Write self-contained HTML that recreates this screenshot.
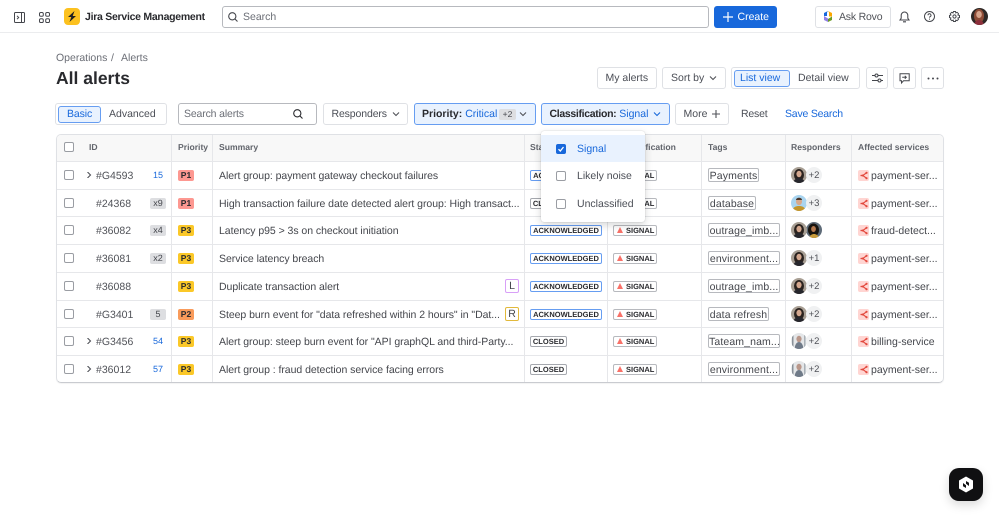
<!DOCTYPE html>
<html lang="en"><head><meta charset="utf-8"><title>All alerts</title>
<style>
*{box-sizing:border-box}
html,body{margin:0;padding:0;background:#fff}
body{width:999px;height:517px;position:relative;overflow:hidden;font-family:"Liberation Sans",sans-serif;font-size:10.5px;color:#4b4e56;text-rendering:geometricPrecision;filter:blur(.25px)}
.a{position:absolute}
.t{position:absolute;white-space:nowrap;line-height:14px;height:14px}
.b{position:absolute;border:1px solid #dfe1e5;border-radius:3px;background:#fff}
.on{position:absolute;border:1px solid #669df1;border-radius:3px;background:#e9f2fe}
.blue{color:#1868db}
.l{position:absolute;background:#e6e7ea}
.cb{position:absolute;left:64px;width:10px;height:10px;border:1px solid #9a9da3;border-radius:2px;background:#fff}
.id{position:absolute;left:96px;white-space:nowrap;line-height:14px;color:#505258;margin-top:1px}
.c{position:absolute;left:150px;width:16px;height:11px;line-height:11px;text-align:center;font-size:9px;border-radius:2px}
.g{background:#dddee1;color:#44464c}
.n{color:#1868db;background:none}
.p{position:absolute;left:178px;width:16px;height:11px;line-height:11px;text-align:center;font-size:8.5px;font-weight:bold;border-radius:2px;color:#292a2e;margin-top:.5px}
.p1{background:#fd9891}.p2{background:#f99b5b}.p3{background:#fbc828}
.s{position:absolute;left:219px;white-space:nowrap;line-height:14px;color:#44464c;margin-top:1px;font-size:10.5px;letter-spacing:-.045px}
.st{position:absolute;left:530px;height:11px;line-height:9px;font-size:7.5px;font-weight:bold;color:#292a2e;border:1px solid #a5a8ae;border-radius:2px;padding:0;text-align:center;white-space:nowrap;background:#fff}
.ack{border-color:#669df1;width:72px}
.cl{width:37px}
.sg{position:absolute;left:613px;width:44px;height:11px;line-height:9px;font-size:7.5px;font-weight:bold;color:#292a2e;border:1px solid #b7b9be;border-radius:2px;padding-left:12px;background:#fff}
.sg:before{content:"";position:absolute;left:3px;top:1.5px;border-left:3.5px solid transparent;border-right:3.5px solid transparent;border-bottom:6px solid #f87168}
.tg{position:absolute;left:708px;height:14px;line-height:14px;border:1px solid #b7b9be;border-radius:2px;text-align:center;color:#44464c;white-space:nowrap;background:#fff;letter-spacing:.12px}
.m{position:absolute;left:806px;width:16px;height:16px;border-radius:50%;background:#f0f1f2;font-size:9.5px;line-height:17px;text-align:center;color:#505258}
.av{position:absolute;left:791px;width:16px;height:16px;border-radius:50%;overflow:hidden}
.sv{position:absolute;left:858px;width:11px;height:11px;border-radius:2px;background:#ffd5d2;margin-top:0}
.svt{position:absolute;left:871px;white-space:nowrap;line-height:14px;color:#44464c;margin-top:1px}
.h{position:absolute;top:140px;line-height:14px;font-size:8.6px;font-weight:bold;color:#62656c;white-space:nowrap}
.chev{position:absolute;left:86px;width:6px;height:6px}
svg{display:block;overflow:visible}
</style></head><body>
<svg width="0" height="0" style="position:absolute"><defs>
<symbol id="a1" viewBox="0 0 16 16"><rect width="16" height="16" fill="#a89f94"/><ellipse cx="8" cy="8" rx="5" ry="6" fill="#2a221e"/><ellipse cx="8" cy="7" rx="2.6" ry="3.2" fill="#d3a78e"/><path d="M2 16c1-4 4-5 6-5s5 1 6 5z" fill="#26262c"/></symbol>
<symbol id="a2" viewBox="0 0 16 16"><rect width="16" height="16" fill="#a9d4ef"/><ellipse cx="8" cy="6.6" rx="3" ry="3.5" fill="#d8a98c"/><path d="M5 5c0-3 6-3 6 0z" fill="#4a3427"/><path d="M1 16c1-4 4-5 7-5s6 1 7 5z" fill="#c4952a"/></symbol>
<symbol id="a3" viewBox="0 0 16 16"><rect width="16" height="16" fill="#5e6b78"/><ellipse cx="7.5" cy="8" rx="5.5" ry="6.5" fill="#17130f"/><ellipse cx="7.5" cy="7" rx="2.4" ry="3" fill="#b5794f"/><path d="M3 16c1-3 3-4 5-4s4 1 5 4z" fill="#c89a3a"/></symbol>
<symbol id="a4" viewBox="0 0 16 16"><rect width="16" height="16" fill="#e4e6e8"/><rect x="1" y="2" width="1.5" height="12" fill="#8a9199"/><rect x="13" y="2" width="1.5" height="12" fill="#a9b0b6"/><ellipse cx="8" cy="6" rx="2.6" ry="3.2" fill="#b9978a"/><path d="M3.500 16c.5-5 2.500-7 4.500-7s4 2 4.500 7z" fill="#6f7a88"/></symbol>
<symbol id="svc" viewBox="0 0 11 11"><path d="M8.500 2.800 4.800 5.500 8.500 8.200M2.500 5.500h2.300" fill="none" stroke="#e2483d" stroke-width="1.200"/><circle cx="8.500" cy="2.800" r="1.100" fill="#e2483d"/><circle cx="8.500" cy="8.200" r="1.100" fill="#e2483d"/><circle cx="4.500" cy="5.500" r="1" fill="#e2483d"/></symbol>
<symbol id="chv" viewBox="0 0 6 6"><path d="M1.500 0 4.500 3 1.500 6" fill="none" stroke="#505258" stroke-width="1.100"/></symbol>
<symbol id="dn" viewBox="0 0 8 8"><path d="M1 2.500 4 5.500 7 2.500" fill="none" stroke="#505258" stroke-width="1.100"/></symbol>
<symbol id="dnb" viewBox="0 0 8 8"><path d="M1 2.500 4 5.500 7 2.500" fill="none" stroke="#1868db" stroke-width="1.100"/></symbol>
</defs></svg>

<!-- top bar -->
<div class="a" style="left:0;top:32px;width:999px;height:1px;background:#ebecee"></div>
<svg class="a" style="left:14px;top:11.500px" width="11" height="11" viewBox="0 0 11 11" fill="none" stroke="#44464c"><rect x=".5" y=".5" width="10" height="10" rx="1"/><path d="M7.500 1v9M3 3.800 4.700 5.500 3 7.200"/></svg>
<svg class="a" style="left:39px;top:11.500px" width="11" height="11" viewBox="0 0 11 11" fill="none" stroke="#44464c"><rect x=".5" y=".5" width="3.800" height="3.800" rx="1.300"/><rect x="6.700" y=".5" width="3.800" height="3.800" rx="1.300"/><rect x=".5" y="6.700" width="3.800" height="3.800" rx="1.300"/><rect x="6.700" y="6.700" width="3.800" height="3.800" rx="1.300"/></svg>
<div class="a" style="left:64px;top:8px;width:16px;height:17px;border-radius:4px;background:#fcc11f"></div>
<svg class="a" style="left:64px;top:8px" width="16" height="17" viewBox="0 0 16 17"><path d="M10.500 3 4 9h3.300L5.500 14 12 8H8.700z" fill="#1f1f21"/></svg>
<div class="t" style="left:85px;top:9.500px;font-size:10.500px;color:#292a2e;font-weight:bold;letter-spacing:-.27px">Jira Service Management</div>
<div class="a" style="left:222px;top:5.500px;width:487px;height:22px;border:1px solid #b7b9be;border-radius:3px"></div>
<svg class="a" style="left:228px;top:12px" width="10" height="10" viewBox="0 0 10 10" fill="none" stroke="#44464c" stroke-width="1.100"><circle cx="4.300" cy="4.300" r="3.600"/><path d="M7 7l2.500 2.500"/></svg>
<div class="t" style="left:243px;top:9.500px;color:#6b6e76">Search</div>
<div class="a" style="left:714px;top:5.500px;width:63px;height:22px;background:#1868db;border-radius:3px"></div>
<svg class="a" style="left:723px;top:12px" width="10" height="10" viewBox="0 0 10 10" stroke="#fff" stroke-width="1.200"><path d="M5 0v10M0 5h10"/></svg>
<div class="t" style="left:737.500px;top:9.500px;color:#fff">Create</div>
<div class="b" style="left:815px;top:5.500px;width:76px;height:22px"></div>
<svg class="a" style="left:823px;top:11px" width="10" height="11" viewBox="0 0 10 11"><path d="M5 0 1 2v3h3V1.500z" fill="#1868db"/><path d="M5 0l4 2v3.500H6V1.500z" fill="#fca700"/><path d="M1 5v4l4 2V7.500z" fill="#8f7ee7"/><path d="M9 5.500V9l-4 2V8z" fill="#6a9a23"/></svg>
<div class="t" style="left:839px;top:9.500px;color:#505258;letter-spacing:-.2px">Ask Rovo</div>
<svg class="a" style="left:899px;top:10.500px" width="11" height="12" viewBox="0 0 11 12" fill="none" stroke="#44464c" stroke-width="1.050"><path d="M1 9h9L8.800 7.200V4.300a3.300 3.300 0 0 0-6.600 0v2.900zM4 10.800h3"/></svg>
<svg class="a" style="left:924px;top:11px" width="11" height="11" viewBox="0 0 11 11" fill="none" stroke="#44464c" stroke-width="1"><circle cx="5.500" cy="5.500" r="5"/><path d="M4 4.300a1.500 1.500 0 1 1 2.200 1.300c-.5.300-.7.500-.7 1"/><path d="M5.500 7.600v1"/></svg>
<svg class="a" style="left:949px;top:11px" width="11" height="11" viewBox="0 0 11 11" fill="none" stroke="#44464c" stroke-width="1"><path d="M4.500.5h2l.3 1.400 1.300-.6 1.400 1.400-.6 1.300 1.600.5v2l-1.600.5.600 1.300-1.400 1.400-1.300-.6-.3 1.400h-2l-.3-1.400-1.300.6L1.300 8.300l.6-1.300L.5 6.500v-2l1.400-.5-.6-1.300 1.400-1.400 1.300.6z"/><circle cx="5.500" cy="5.500" r="1.600"/></svg>
<svg class="a" style="left:971px;top:8px" width="17" height="17" viewBox="0 0 17 17"><defs><clipPath id="cc"><circle cx="8.500" cy="8.500" r="8.500"/></clipPath></defs><g clip-path="url(#cc)"><rect width="17" height="17" fill="#2d2826"/><ellipse cx="8" cy="8" rx="5" ry="7" fill="#8d4c36"/><ellipse cx="8" cy="6.500" rx="2.800" ry="3.500" fill="#d6a48c"/><path d="M3 17c1-4 3-5 5-5s4 1 5 5z" fill="#8c2f3b"/></g></svg>

<!-- heading -->
<div class="t" style="left:56px;top:51px;color:#6b6e76">Operations</div>
<div class="t" style="left:111px;top:51px;color:#6b6e76">/</div>
<div class="t" style="left:121px;top:51px;color:#6b6e76">Alerts</div>
<div class="t" style="left:56px;top:69px;height:18px;line-height:18px;font-size:17.500px;font-weight:bold;color:#292a2e">All alerts</div>

<!-- top right buttons -->
<div class="b" style="left:597px;top:67px;width:60px;height:22px"></div>
<div class="t" style="left:605.500px;top:71px">My alerts</div>
<div class="b" style="left:662px;top:67px;width:64px;height:22px"></div>
<div class="t" style="left:671px;top:71px">Sort by</div>
<svg class="a" style="left:709px;top:74px" width="8" height="8"><use href="#dn"/></svg>
<div class="b" style="left:731px;top:67px;width:129px;height:22px"></div>
<div class="on" style="left:734px;top:69.500px;width:56px;height:17px"></div>
<div class="t blue" style="left:740px;top:71px">List view</div>
<div class="t" style="left:798px;top:71px">Detail view</div>
<div class="b" style="left:866px;top:67px;width:22px;height:22px"></div>
<svg class="a" style="left:871.500px;top:73px" width="11" height="10" viewBox="0 0 11 10" fill="none" stroke="#44464c"><path d="M0 2.500h3M6 2.500h5M0 7.500h6M9 7.500h2"/><circle cx="4.500" cy="2.500" r="1.500"/><circle cx="7.500" cy="7.500" r="1.500"/></svg>
<div class="b" style="left:893px;top:67px;width:23px;height:22px"></div>
<svg class="a" style="left:899px;top:72.500px" width="11" height="11" viewBox="0 0 11 11" fill="none" stroke="#44464c"><path d="M1 .8h9.200v7H4.500L2.500 10V7.800H1zM3.200 4.300h4M5.800 2.800l1.500 1.500-1.500 1.500"/></svg>
<div class="b" style="left:921px;top:67px;width:23px;height:22px"></div>
<svg class="a" style="left:926.500px;top:77px" width="12" height="3" viewBox="0 0 12 3" fill="#44464c"><circle cx="1.500" cy="1.500" r="1"/><circle cx="6" cy="1.500" r="1"/><circle cx="10.500" cy="1.500" r="1"/></svg>

<!-- filters -->
<div class="b" style="left:55px;top:103px;width:112px;height:22px"></div>
<div class="on" style="left:58px;top:105.500px;width:43px;height:17px"></div>
<div class="t blue" style="left:67px;top:107px;letter-spacing:-.1px">Basic</div>
<div class="t" style="left:109px;top:107px">Advanced</div>
<div class="a" style="left:178px;top:103px;width:139px;height:22px;border:1px solid #b7b9be;border-radius:3px"></div>
<div class="t" style="left:184px;top:107px;color:#6b6e76;letter-spacing:-.15px">Search alerts</div>
<svg class="a" style="left:292.500px;top:109px" width="10" height="10" viewBox="0 0 10 10" fill="none" stroke="#292a2e" stroke-width="1.100"><circle cx="4.300" cy="4.300" r="3.600"/><path d="M7 7l2.500 2.500"/></svg>
<div class="b" style="left:323px;top:103px;width:85px;height:22px"></div>
<div class="t" style="left:331.500px;top:107px;letter-spacing:-.12px">Responders</div>
<svg class="a" style="left:391.500px;top:110px" width="8" height="8"><use href="#dn"/></svg>
<div class="on" style="left:414px;top:103px;width:122px;height:22px"></div>
<div class="t" style="left:422px;top:107px"><b style="color:#292a2e">Priority:</b> <span class="blue">Critical</span></div>
<div class="a" style="left:499px;top:108.500px;width:17px;height:11px;background:#dddee1;border-radius:2px;font-size:8.500px;line-height:11px;text-align:center;color:#44464c">+2</div>
<svg class="a" style="left:519px;top:110px" width="8" height="8"><use href="#dn"/></svg>
<div class="on" style="left:541px;top:103px;width:129px;height:22px"></div>
<div class="t" style="left:549.500px;top:107px"><b style="color:#292a2e;letter-spacing:-.33px">Classification:</b> <span class="blue">Signal</span></div>
<svg class="a" style="left:653px;top:110px" width="8" height="8"><use href="#dnb"/></svg>
<div class="b" style="left:675px;top:103px;width:54px;height:22px"></div>
<div class="t" style="left:683.500px;top:107px">More</div>
<svg class="a" style="left:711.500px;top:110px" width="8" height="8" viewBox="0 0 8 8" stroke="#505258" stroke-width="1.100"><path d="M4 0v8M0 4h8"/></svg>
<div class="t" style="left:741px;top:107px;letter-spacing:-.2px">Reset</div>
<div class="t blue" style="left:785px;top:107px;letter-spacing:-.2px">Save Search</div>

<!-- table -->
<div class="a" style="left:56px;top:134px;width:888px;height:249px;border:1px solid #dfe1e5;border-bottom:1px solid #c9cbd0;border-radius:5px;box-shadow:0 1px 1px rgba(0,0,0,.05)"></div>
<div class="a" style="left:57px;top:135px;width:886px;height:26px;background:#f8f8f8;border-radius:4px 4px 0 0"></div>
<div class="l" style="left:57px;top:161px;width:886px;height:1px"></div>
<div class="l" style="left:57px;top:188.500px;width:886px;height:1px"></div>
<div class="l" style="left:57px;top:216px;width:886px;height:1px"></div>
<div class="l" style="left:57px;top:244px;width:886px;height:1px"></div>
<div class="l" style="left:57px;top:271.500px;width:886px;height:1px"></div>
<div class="l" style="left:57px;top:299.500px;width:886px;height:1px"></div>
<div class="l" style="left:57px;top:327px;width:886px;height:1px"></div>
<div class="l" style="left:57px;top:354.500px;width:886px;height:1px"></div>
<div class="l" style="left:171px;top:135px;width:1px;height:247px"></div>
<div class="l" style="left:212px;top:135px;width:1px;height:247px"></div>
<div class="l" style="left:524px;top:135px;width:1px;height:247px"></div>
<div class="l" style="left:607px;top:135px;width:1px;height:247px"></div>
<div class="l" style="left:701px;top:135px;width:1px;height:247px"></div>
<div class="l" style="left:785px;top:135px;width:1px;height:247px"></div>
<div class="l" style="left:851px;top:135px;width:1px;height:247px"></div>

<div class="cb" style="top:142px"></div>
<div class="h" style="left:89px">ID</div>
<div class="h" style="left:178px">Priority</div>
<div class="h" style="left:219px">Summary</div>
<div class="h" style="left:530px">Status</div>
<div class="h" style="left:620px">Classification</div>
<div class="h" style="left:708px">Tags</div>
<div class="h" style="left:791px">Responders</div>
<div class="h" style="left:858px">Affected services</div>

<!-- r1 -->
<div class="cb" style="top:170px"></div>
<svg class="chev" style="top:172px" viewBox="0 0 6 6"><use href="#chv"/></svg>
<div class="id" style="top:168px">#G4593</div>
<div class="c n" style="top:169.500px">15</div>
<div class="p p1" style="top:169px">P1</div>
<div class="s" style="top:168px">Alert group: payment gateway checkout failures</div>
<div class="st ack" style="top:169.500px">ACKNOWLEDGED</div>
<div class="sg" style="top:169.500px">SIGNAL</div>
<div class="tg" style="top:168px;width:51px">Payments</div>
<svg class="av" style="top:167px" viewBox="0 0 16 16"><use href="#a1"/></svg><div class="m" style="top:167px">+2</div>
<div class="sv" style="top:169.500px"><svg width="11" height="11"><use href="#svc"/></svg></div>
<div class="svt" style="top:168px">payment-ser...</div>
<!-- r2 -->
<div class="cb" style="top:198px"></div>
<div class="id" style="top:196px">#24368</div>
<div class="c g" style="top:197.500px">x9</div>
<div class="p p1" style="top:197px">P1</div>
<div class="s" style="top:196px">High transaction failure date detected alert group: High transact...</div>
<div class="st cl" style="top:197.500px">CLOSED</div>
<div class="sg" style="top:197.500px">SIGNAL</div>
<div class="tg" style="top:196px;width:48px">database</div>
<svg class="av" style="top:195px" viewBox="0 0 16 16"><use href="#a2"/></svg><div class="m" style="top:195px">+3</div>
<div class="sv" style="top:197.500px"><svg width="11" height="11"><use href="#svc"/></svg></div>
<div class="svt" style="top:196px">payment-ser...</div>
<!-- r3 -->
<div class="cb" style="top:225px"></div>
<div class="id" style="top:223px">#36082</div>
<div class="c g" style="top:224.500px">x4</div>
<div class="p p3" style="top:224px">P3</div>
<div class="s" style="top:223px">Latency p95 &gt; 3s on checkout initiation</div>
<div class="st ack" style="top:224.500px">ACKNOWLEDGED</div>
<div class="sg" style="top:224.500px">SIGNAL</div>
<div class="tg" style="top:223px;width:72px">outrage_imb...</div>
<svg class="av" style="top:222px;left:806px" viewBox="0 0 16 16"><use href="#a3"/></svg>
<svg class="av" style="top:222px" viewBox="0 0 16 16"><use href="#a1"/></svg>
<div class="sv" style="top:224.500px"><svg width="11" height="11"><use href="#svc"/></svg></div>
<div class="svt" style="top:223px">fraud-detect...</div>
<!-- r4 -->
<div class="cb" style="top:253px"></div>
<div class="id" style="top:251px">#36081</div>
<div class="c g" style="top:252.500px">x2</div>
<div class="p p3" style="top:252px">P3</div>
<div class="s" style="top:251px">Service latency breach</div>
<div class="st ack" style="top:252.500px">ACKNOWLEDGED</div>
<div class="sg" style="top:252.500px">SIGNAL</div>
<div class="tg" style="top:251px;width:72px">environment...</div>
<svg class="av" style="top:250px" viewBox="0 0 16 16"><use href="#a1"/></svg><div class="m" style="top:250px">+1</div>
<div class="sv" style="top:252.500px"><svg width="11" height="11"><use href="#svc"/></svg></div>
<div class="svt" style="top:251px">payment-ser...</div>
<!-- r5 -->
<div class="cb" style="top:281px"></div>
<div class="id" style="top:279px">#36088</div>
<div class="p p3" style="top:280px">P3</div>
<div class="s" style="top:279px">Duplicate transaction alert</div>
<div class="a" style="left:505px;top:279px;width:14px;height:14px;border:1px solid #d8a0f7;border-radius:2px;text-align:center;line-height:12px;color:#44464c">L</div>
<div class="st ack" style="top:280.500px">ACKNOWLEDGED</div>
<div class="sg" style="top:280.500px">SIGNAL</div>
<div class="tg" style="top:279px;width:72px">outrage_imb...</div>
<svg class="av" style="top:278px" viewBox="0 0 16 16"><use href="#a1"/></svg><div class="m" style="top:278px">+2</div>
<div class="sv" style="top:280.500px"><svg width="11" height="11"><use href="#svc"/></svg></div>
<div class="svt" style="top:279px">payment-ser...</div>
<!-- r6 -->
<div class="cb" style="top:309px"></div>
<div class="id" style="top:307px">#G3401</div>
<div class="c g" style="top:308.500px">5</div>
<div class="p p2" style="top:308px">P2</div>
<div class="s" style="top:307px">Steep burn event for "data refreshed within 2 hours" in "Dat...</div>
<div class="a" style="left:505px;top:307px;width:14px;height:14px;border:1px solid #e2b93b;border-radius:2px;text-align:center;line-height:12px;color:#44464c">R</div>
<div class="st ack" style="top:308.500px">ACKNOWLEDGED</div>
<div class="sg" style="top:308.500px">SIGNAL</div>
<div class="tg" style="top:307px;width:61px">data refresh</div>
<svg class="av" style="top:306px" viewBox="0 0 16 16"><use href="#a1"/></svg><div class="m" style="top:306px">+2</div>
<div class="sv" style="top:308.500px"><svg width="11" height="11"><use href="#svc"/></svg></div>
<div class="svt" style="top:307px">payment-ser...</div>
<!-- r7 -->
<div class="cb" style="top:336px"></div>
<svg class="chev" style="top:338px" viewBox="0 0 6 6"><use href="#chv"/></svg>
<div class="id" style="top:334px">#G3456</div>
<div class="c n" style="top:335.500px">54</div>
<div class="p p3" style="top:335px">P3</div>
<div class="s" style="top:334px">Alert group: steep burn event for "API graphQL and third-Party...</div>
<div class="st cl" style="top:335.500px">CLOSED</div>
<div class="sg" style="top:335.500px">SIGNAL</div>
<div class="tg" style="top:334px;width:72px">Tateam_nam...</div>
<svg class="av" style="top:333px" viewBox="0 0 16 16"><use href="#a4"/></svg><div class="m" style="top:333px">+2</div>
<div class="sv" style="top:335.500px"><svg width="11" height="11"><use href="#svc"/></svg></div>
<div class="svt" style="top:334px">billing-service</div>
<!-- r8 -->
<div class="cb" style="top:364px"></div>
<svg class="chev" style="top:366px" viewBox="0 0 6 6"><use href="#chv"/></svg>
<div class="id" style="top:362px">#36012</div>
<div class="c n" style="top:363.500px">57</div>
<div class="p p3" style="top:363px">P3</div>
<div class="s" style="top:362px">Alert group : fraud detection service facing errors</div>
<div class="st cl" style="top:363.500px">CLOSED</div>
<div class="sg" style="top:363.500px">SIGNAL</div>
<div class="tg" style="top:362px;width:72px">environment...</div>
<svg class="av" style="top:361px" viewBox="0 0 16 16"><use href="#a4"/></svg><div class="m" style="top:361px">+2</div>
<div class="sv" style="top:363.500px"><svg width="11" height="11"><use href="#svc"/></svg></div>
<div class="svt" style="top:362px">payment-ser...</div>

<!-- dropdown -->
<div class="a" style="left:541px;top:131px;width:104px;height:91px;background:#fff;border-radius:3px;box-shadow:0 3px 8px rgba(30,31,33,.18),0 0 1px rgba(30,31,33,.3)"></div>
<div class="a" style="left:541px;top:135px;width:104px;height:27px;background:#e9f2fe"></div>
<div class="a" style="left:556px;top:144px;width:10px;height:10px;background:#1868db;border-radius:2px"></div>
<svg class="a" style="left:556px;top:144px" width="10" height="10" viewBox="0 0 10 10" fill="none" stroke="#fff" stroke-width="1.300"><path d="M2.500 5.200 4.300 7 7.500 3"/></svg>
<div class="t blue" style="left:577px;top:141.500px">Signal</div>
<div class="a" style="left:556px;top:171px;width:10px;height:10px;border:1px solid #9a9da3;border-radius:2px"></div>
<div class="t" style="left:577px;top:169px">Likely noise</div>
<div class="a" style="left:556px;top:199px;width:10px;height:10px;border:1px solid #9a9da3;border-radius:2px"></div>
<div class="t" style="left:577px;top:197px">Unclassified</div>

<!-- fab -->
<div class="a" style="left:949px;top:468px;width:34px;height:33px;background:#101012;border-radius:10px;box-shadow:0 4px 10px rgba(0,0,0,.15)"></div>
<svg class="a" style="left:958px;top:475.500px" width="16" height="17" viewBox="0 0 16 17"><path d="M8 .5 15 4.500v8L8 16.500 1 12.500v-8z" fill="#fff"/><path d="M8 5 11 6.800V10L8 7.800zM8 12 5 10.200V7L8 9.200z" fill="#101012"/></svg>
</body></html>
